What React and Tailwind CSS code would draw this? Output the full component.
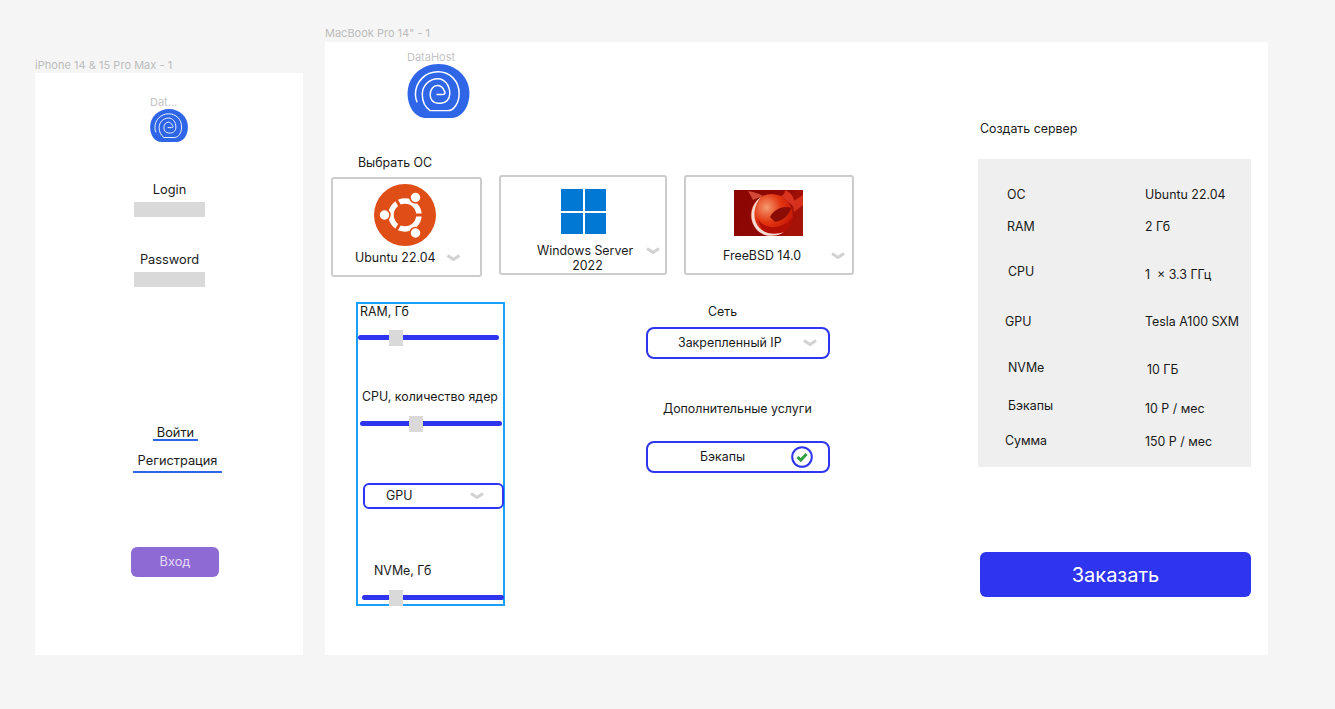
import React from "react";

const Logo = ({ className }) => (
  <svg viewBox="0 0 63 55" className={className}>
    <path d="M31.5 0C14 0 0 13 0 30C0 44 8 55 19 55H44C55 55 63 44 63 30C63 13 49 0 31.5 0Z" fill="#2f66e8" />
    <path
      d="M30 31H36C38.5 31 38.5 29 37.5 27.5C36 24 33 22 30.5 22C26 22 23 26 23 31C23 36 26 40 31 40H34C39 40 43 36 43 30C43 21 37 15 31 15C22 15 15 22 15 31C15 38 18 44 23 47.5H41C47 47.5 52.5 40 52.5 30C52.5 17 43 8 31 8C18 8 8 18 8 31C8 34 8.5 36 9.5 38.5"
      fill="none"
      stroke="#fff"
      strokeWidth="1.5"
      strokeLinecap="round"
    />
  </svg>
);

const Chevron = ({ className }) => (
  <svg viewBox="0 0 14 8" className={className}>
    <path d="M1 1.5L7 5.5L13 1.5" fill="none" stroke="#d2d2d2" strokeWidth="3" />
  </svg>
);

const Ubuntu = () => (
  <svg viewBox="0 0 62 62" className="w-[62px] h-[62px] block">
    <circle cx="31" cy="31" r="31" fill="#e04e17" />
    <circle cx="31" cy="31" r="14" fill="none" stroke="#fff" strokeWidth="5.5" />
    <g stroke="#e04e17" strokeWidth="3">
      <path d="M31 31L54 31" />
      <path d="M31 31L19.5 11" />
      <path d="M31 31L19.5 51" />
    </g>
    <g fill="#fff" stroke="#e04e17" strokeWidth="1.5">
      <circle cx="10.5" cy="31" r="5.5" />
      <circle cx="41.5" cy="13.5" r="5.5" />
      <circle cx="41.5" cy="49" r="5.5" />
    </g>
  </svg>
);

const Windows = () => (
  <div className="grid grid-cols-2 gap-[2px] w-[45px] h-[45px]">
    <div className="bg-[#0078d4]" />
    <div className="bg-[#0078d4]" />
    <div className="bg-[#0078d4]" />
    <div className="bg-[#0078d4]" />
  </div>
);

const FreeBSD = () => (
  <svg viewBox="0 0 69 46" className="w-[69px] h-[46px] block">
    <defs>
      <linearGradient id="bsdbg" x1="0" y1="0" x2="1" y2="0.3">
        <stop offset="0" stopColor="#8a0603" />
        <stop offset="0.6" stopColor="#8f0805" />
        <stop offset="1" stopColor="#a51208" />
      </linearGradient>
      <radialGradient id="bsdball" cx="0.38" cy="0.32" r="0.72">
        <stop offset="0" stopColor="#f59a70" />
        <stop offset="0.5" stopColor="#e2340f" />
        <stop offset="1" stopColor="#bf1205" />
      </radialGradient>
    </defs>
    <rect width="69" height="46" fill="url(#bsdbg)" />
    <path d="M58 12L69 5V15L60 22Z" fill="#d4301c" />
    <path d="M19 10C17 6 15 3 14 1C20 2 26 4 29 6Z" fill="#d24a36" />
    <path d="M47 6C50 5 51 3 51 0C58 3 62 9 59 16Z" fill="#d8331f" />
    <circle cx="37.7" cy="25" r="21" fill="url(#bsdball)" />
    <path d="M24 29C30 40 48 40 58.5 28C57 38 47 46 38 46C31 46 26 38 24 29Z" fill="#b30f05" />
    <path d="M36 27C40 19 50 15 57 18C56 24 49 31 41 32Z" fill="#8a0c05" />
    <path d="M27 7C17 14 13 30 24 41C31 47 42 47.500 50 42C42 45 31 44 25.500 38C18 30 19 16 27 7Z" fill="#f3dcd4" />
  </svg>
);

const Slider = ({ trackClass, thumbClass }) => (
  <div className={`relative h-[5px] rounded-full bg-[#2f35ee] ${trackClass}`}>
    <div className={`absolute top-[-5px] w-[14px] h-[16px] bg-[#d9d9d9] ${thumbClass}`} />
  </div>
);

const specs = [
  { l: "ОС", v: "Ubuntu 22.04", cls: "h-[32px]", lc: "pl-[2px]", vc: "" },
  { l: "RAM", v: "2 Гб", cls: "h-[45px]", lc: "pl-[2px]", vc: "" },
  { l: "CPU", v: "1 \u00a0× 3.3 ГГц", cls: "h-[50px]", lc: "pl-[3px]", vc: "mt-[3px]" },
  { l: "GPU", v: "Tesla A100 SXM", cls: "h-[46px]", lc: "", vc: "" },
  { l: "NVMe", v: "10 ГБ", cls: "h-[38px]", lc: "pl-[3px]", vc: "ml-[2px] mt-[2px]" },
  { l: "Бэкапы", v: "10 Р / мес", cls: "h-[35px]", lc: "pl-[3px]", vc: "mt-[3px]" },
  { l: "Сумма", v: "150 Р / мес", cls: "h-[20px]", lc: "", vc: "mt-[1px]" },
];

export default function App() {
  return (
    <div
      className="h-[709px] w-[1335px] overflow-hidden bg-[#f5f5f5] leading-[16px] text-[#1a1a1a] flex items-start pl-[35px] pt-[26px] gap-[22px]"
      style={{ fontFamily: "Inter, 'Liberation Sans', sans-serif" }}
    >
      {/* Mobile frame */}
      <div className="mt-[32px] w-[268px] text-[12.8px]">
        <div className="text-[11px] leading-[14px] text-[#bcbcbc] h-[15px] tracking-[0.03px]">iPhone 14 &amp; 15 Pro Max - 1</div>
        <div className="bg-white h-[582px] flex flex-col">
          <div className="ml-[115px] mt-[22px] text-[11px] leading-[14px] text-[#c4c4c4]">Dat...</div>
          <Logo className="ml-[115px] w-[38px] h-[33px] block" />
          <div className="ml-[99px] w-[71px] mt-[40px] text-center">Login</div>
          <div className="ml-[99px] w-[71px] h-[15px] mt-[4px] bg-[#d9d9d9]" />
          <div className="ml-[99px] w-[71px] mt-[35px] text-center whitespace-nowrap">Password</div>
          <div className="ml-[99px] w-[71px] h-[15px] mt-[4px] bg-[#d9d9d9]" />
          <div className="ml-[118px] w-[45px] mt-[138px] text-center border-b-2 border-[#2f66e8] h-[16px] leading-[16px]">Войти</div>
          <div className="ml-[98px] w-[89px] mt-[12px] text-center border-b-2 border-[#2f66e8] h-[20px] leading-[15px] whitespace-nowrap">Регистрация</div>
          <div className="ml-[96px] w-[88px] h-[30px] mt-[74px] rounded-[6px] bg-[#8e6ad4] text-[#e6dbf6] flex items-center justify-center">Вход</div>
        </div>
      </div>

      {/* Desktop frame */}
      <div className="w-[943px] text-[12.4px]">
        <div className="text-[11px] leading-[14px] text-[#bcbcbc] h-[16px]">MacBook Pro 14&quot; - 1</div>
        <div className="bg-white h-[613px] flex">
          <div className="w-[653px] flex flex-col">
            <div className="ml-[82px] mt-[8px] text-[11px] leading-[14px] text-[#c4c4c4]">DataHost</div>
            <Logo className="ml-[82px] w-[63px] h-[54px] block" />
            <div className="ml-[33px] mt-[37px]">Выбрать ОС</div>

            <div className="flex items-start ml-[6px] mt-[-3px]">
              <div className="w-[151px] h-[100px] mt-[9px] border-2 border-[#cccccc] rounded-[3px] flex flex-col">
                <div className="ml-[41px] mt-[5px]"><Ubuntu /></div>
                <div className="flex items-center mt-[4px] ml-[22px]">
                  <span className="whitespace-nowrap">Ubuntu 22.04</span>
                  <Chevron className="ml-[10px] w-[15px] h-[8px]" />
                </div>
              </div>
              <div className="w-[168px] h-[100px] mt-[7px] ml-[17px] border-2 border-[#cccccc] rounded-[3px] flex flex-col">
                <div className="ml-[60px] mt-[12px]"><Windows /></div>
                <div className="flex items-start mt-[9px]">
                  <span className="ml-[19px] w-[135px] text-center leading-[15px]">
                    <span className="block pr-[5px]">Windows Server</span>
                    <span className="block">2022</span>
                  </span>
                  <Chevron className="mt-[4px] ml-[-9px] w-[14px] h-[8px]" />
                </div>
              </div>
              <div className="w-[170px] h-[100px] mt-[7px] ml-[17px] border-2 border-[#cccccc] rounded-[3px] flex flex-col">
                <div className="ml-[48px] mt-[13px]"><FreeBSD /></div>
                <div className="flex items-center mt-[12px] ml-[37px]">
                  <span className="whitespace-nowrap">FreeBSD 14.0</span>
                  <Chevron className="ml-[29px] w-[16px] h-[8px]" />
                </div>
              </div>
            </div>

            <div className="flex items-start ml-[31px] mt-[25px]">
              <div className="w-[149px] h-[304px] border-2 border-[#18a0fb] flex flex-col">
                <div className="ml-[2px]">RAM, Гб</div>
                <Slider trackClass="mt-[15px] w-[141px]" thumbClass="left-[31px]" />
                <div className="ml-[4px] mt-[49px] whitespace-nowrap">CPU, количество ядер</div>
                <Slider trackClass="mt-[16px] ml-[2px] w-[142px]" thumbClass="left-[49px]" />
                <div className="ml-[5px] mt-[57px] w-[141px] h-[26px] border-2 border-[#2f35ee] rounded-[6px] flex items-center">
                  <span className="ml-[21px]">GPU</span>
                  <Chevron className="ml-[58px] w-[14px] h-[8px]" />
                </div>
                <div className="ml-[16px] mt-[54px]">NVMe, Гб</div>
                <Slider trackClass="mt-[16px] ml-[4px] w-[142px]" thumbClass="left-[27px]" />
              </div>
              <div className="ml-[141px] w-[184px] flex flex-col">
                <div className="ml-[62px] mt-[2px]">Сеть</div>
                <div className="mt-[7px] h-[32px] border-2 border-[#2f35ee] rounded-[8px] flex items-center">
                  <span className="ml-[30px] whitespace-nowrap">Закрепленный IP</span>
                  <Chevron className="ml-[21px] w-[14px] h-[8px]" />
                </div>
                <div className="mt-[42px] ml-[17px] whitespace-nowrap">Дополнительные услуги</div>
                <div className="mt-[24px] h-[32px] border-2 border-[#2f35ee] rounded-[8px] flex items-center">
                  <span className="ml-[52px]">Бэкапы</span>
                  <svg viewBox="0 0 22 22" className="ml-[46px] w-[22px] h-[22px]">
                    <circle cx="11" cy="11" r="9.8" fill="#fff" stroke="#2f35ee" strokeWidth="2" />
                    <path d="M6.5 11L9.8 14.2L15.5 8" fill="none" stroke="#2e9e3f" strokeWidth="3" />
                  </svg>
                </div>
              </div>
            </div>
          </div>

          <div className="w-[273px] flex flex-col">
            <div className="ml-[2px] mt-[79px]">Создать сервер</div>
            <div className="mt-[22px] h-[308px] bg-[#efefef] pt-[28px] pl-[27px]">
              {specs.map((s) => (
                <div key={s.l} className={`flex items-start ${s.cls}`}>
                  <div className={`w-[140px] shrink-0 ${s.lc}`}>{s.l}</div>
                  <div className={`whitespace-nowrap ${s.vc}`}>{s.v}</div>
                </div>
              ))}
            </div>
            <div className="mt-[85px] ml-[2px] h-[45px] rounded-[6px] bg-[#2f35ee] text-white text-[20px] flex items-center justify-center">Заказать</div>
          </div>
        </div>
      </div>
    </div>
  );
}
